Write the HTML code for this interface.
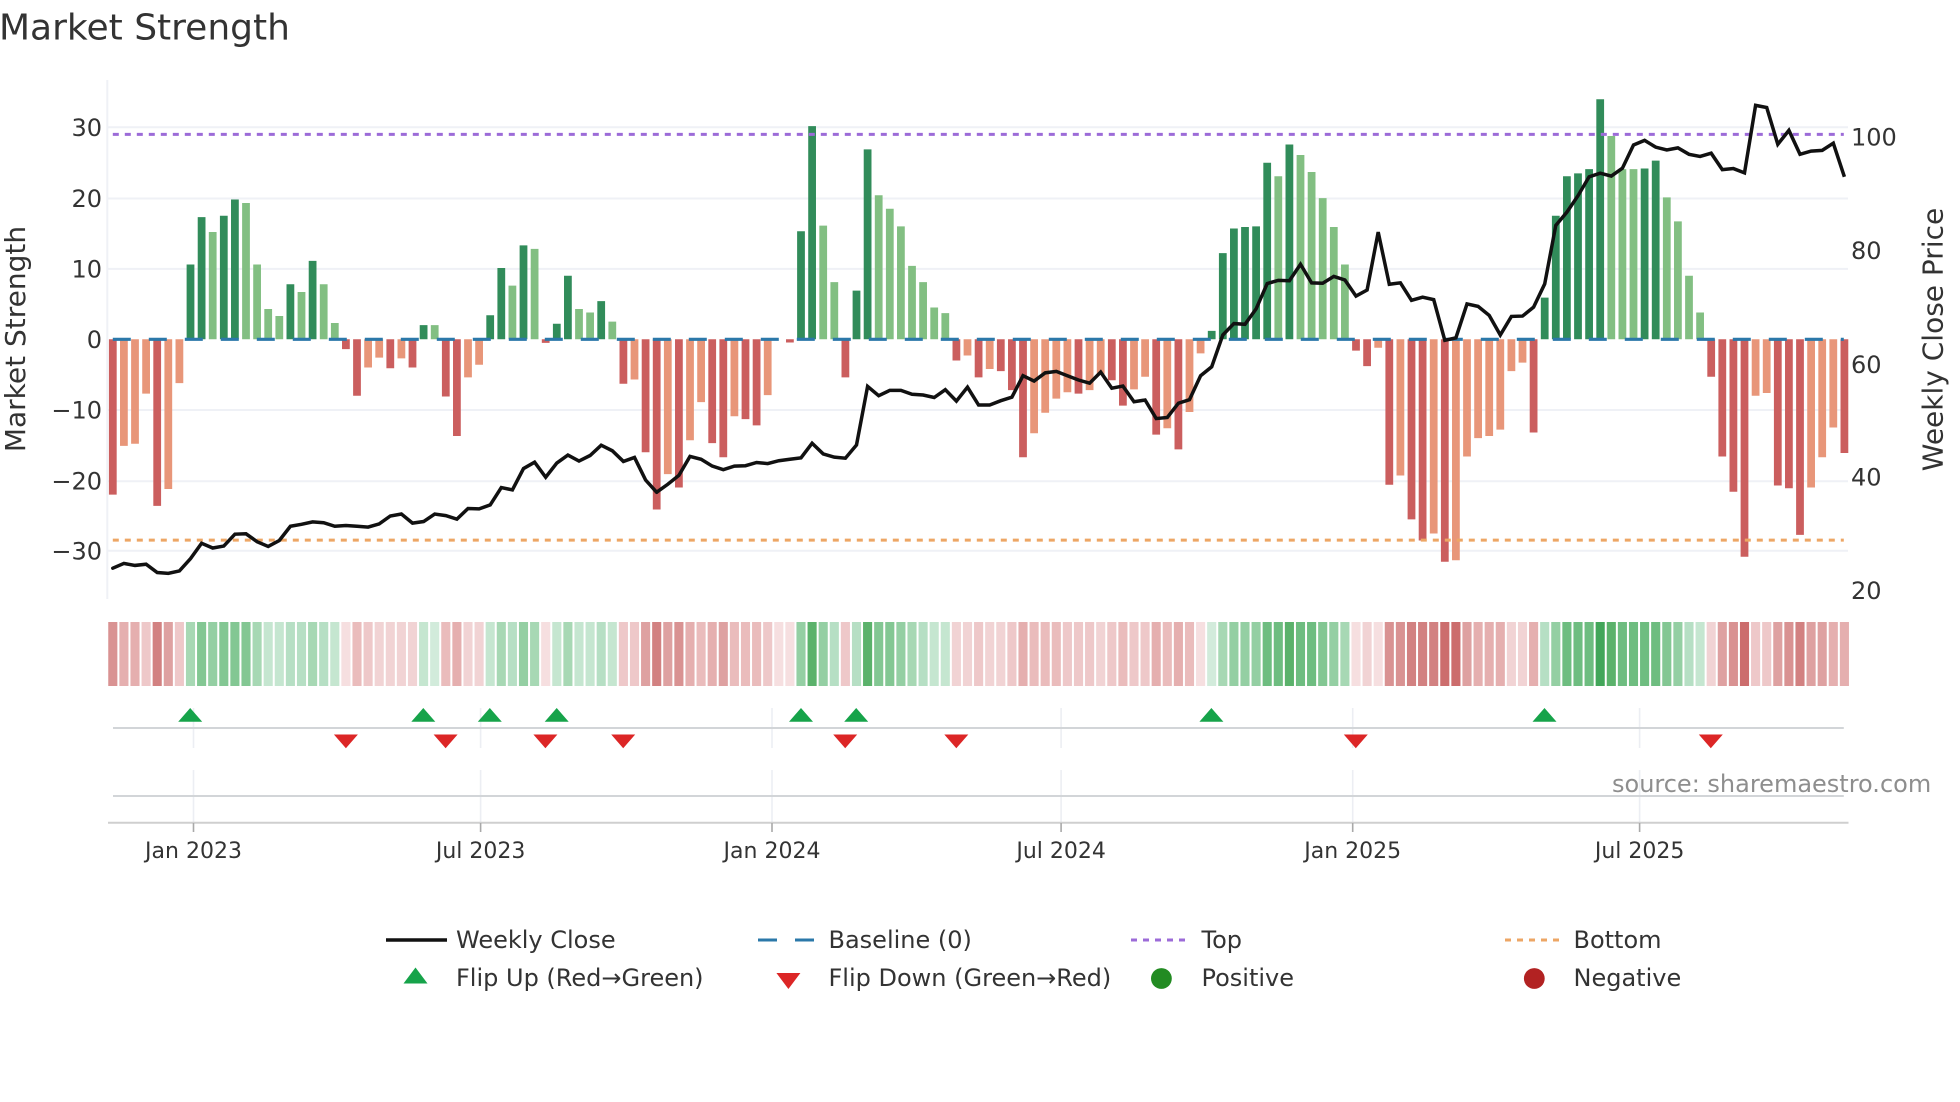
<!DOCTYPE html>
<html><head><meta charset="utf-8"><title>Market Strength</title>
<style>html,body{margin:0;padding:0;background:#fff}svg{display:block}text{font-family:"DejaVu Sans","Liberation Sans",sans-serif;fill:#333}</style>
</head><body>
<svg xmlns="http://www.w3.org/2000/svg" width="1960" height="1102" viewBox="0 0 1960 1102">
<rect width="1960" height="1102" fill="#fff"/>
<text x="-1" y="39.5" font-size="36">Market Strength</text>
<g stroke="#eff1f6" stroke-width="2" fill="none">
<path d="M107.3 80V599"/>
<path d="M108 127.3H1848M108 198.5H1848M108 268.9H1848M108 410H1848M108 481.2H1848M108 550.8H1848"/>
</g>
<g font-size="24" text-anchor="end">
<text x="102" y="136">30</text><text x="102" y="207">20</text><text x="102" y="277.5">10</text><text x="102" y="348">0</text><text x="102" y="418.5">−10</text><text x="102" y="489.5">−20</text><text x="102" y="559.5">−30</text>
</g>
<g font-size="24">
<text x="1851" y="145.6">100</text><text x="1851" y="259">80</text><text x="1851" y="373">60</text><text x="1851" y="485.6">40</text><text x="1851" y="599">20</text>
</g>
<text transform="translate(25,339) rotate(-90)" text-anchor="middle" font-size="28">Market Strength</text>
<text transform="translate(1942.5,339.5) rotate(-90)" text-anchor="middle" font-size="28">Weekly Close Price</text>
<g transform="translate(112.8,339.3) scale(11.1,7.06)" fill="none" stroke-width=".7">
<path stroke="#cb5e5e" d="M0 0V22M4 0V23.6M21 0V1.4M22 0V8M25 0V4.1M27 0V4M30 0V8.1M31 0V13.7M39 0V.5M46 0V6.3M48 0V16M49 0V24.1M51 0V21M54 0V14.7M55 0V16.7M57 0V11.3M58 0V12.2M61 0V.45M66 0V5.4M76 0V3M78 0V5.4M80 0V4.5M81 0V7.2M82 0V16.7M87 0V7.7M90 0V5.8M91 0V9.4M94 0V13.5M96 0V15.6M112 0V1.6M113 0V3.8M115 0V20.6M117 0V25.5M118 0V28.5M120 0V31.5M128 0V13.2M144 0V5.3M145 0V16.6M146 0V21.6M147 0V30.8M150 0V20.7M151 0V21.1M152 0V27.7M156 0V16.1"/>
<path stroke="#e89679" d="M1 0V15.1M2 0V14.8M3 0V7.7M5 0V21.2M6 0V6.2M23 0V4M24 0V2.6M26 0V2.7M32 0V5.4M33 0V3.6M47 0V5.7M50 0V19.1M52 0V14.3M53 0V8.9M56 0V10.9M59 0V7.9M77 0V2.3M79 0V4.2M83 0V13.3M84 0V10.4M85 0V8.4M86 0V7.5M88 0V7.2M89 0V5M92 0V7.1M93 0V5.3M95 0V12.6M97 0V10.3M98 0V2M114 0V1.2M116 0V19.3M119 0V27.5M121 0V31.3M122 0V16.6M123 0V14M124 0V13.7M125 0V12.8M126 0V4.5M127 0V3.3M148 0V8M149 0V7.6M153 0V21M154 0V16.7M155 0V12.5"/>
<path stroke="#318c5a" d="M7 0V-10.6M8 0V-17.3M10 0V-17.5M11 0V-19.8M16 0V-7.8M18 0V-11.1M28 0V-2M34 0V-3.4M35 0V-10.1M37 0V-13.3M40 0V-2.2M41 0V-9M44 0V-5.4M62 0V-15.3M63 0V-30.2M67 0V-6.9M68 0V-26.9M99 0V-1.2M100 0V-12.2M101 0V-15.7M102 0V-15.9M103 0V-16M104 0V-25M106 0V-27.6M129 0V-5.9M130 0V-17.5M131 0V-23.1M132 0V-23.5M133 0V-24.1M134 0V-34M138 0V-24.2M139 0V-25.3"/>
<path stroke="#82bf82" d="M9 0V-15.2M12 0V-19.3M13 0V-10.6M14 0V-4.3M15 0V-3.3M17 0V-6.7M19 0V-7.8M20 0V-2.3M29 0V-2M36 0V-7.6M38 0V-12.8M42 0V-4.3M43 0V-3.8M45 0V-2.5M64 0V-16.1M65 0V-8.1M69 0V-20.4M70 0V-18.5M71 0V-16M72 0V-10.4M73 0V-8.1M74 0V-4.5M75 0V-3.7M105 0V-23.1M107 0V-26.1M108 0V-23.7M109 0V-20M110 0V-15.9M111 0V-10.6M135 0V-28.8M136 0V-24.1M137 0V-24.1M140 0V-20.1M141 0V-16.7M142 0V-9M143 0V-3.8"/>
</g>
<path d="M112.8 339.3H1843.8" stroke="#2b78a9" stroke-width="3.2" stroke-dasharray="18 18" fill="none"/>
<path d="M112.8 134.4H1843.8" stroke="#9c6bd8" stroke-width="3" stroke-dasharray="6 6" fill="none"/>
<path d="M112.8 540.1H1843.8" stroke="#eda665" stroke-width="3" stroke-dasharray="6 6" fill="none"/>
<g fill="none" stroke="#111" stroke-width="3.5" stroke-linejoin="miter">
<path vector-effect="non-scaling-stroke" stroke-linecap="round" transform="translate(112.8,0) scale(11.1,.3954)" d="M0 1437L1 1425L2 1430L3 1427L4 1448L5 1450L6 1444L7 1413L8 1374L9 1386L10 1381L11 1351L12 1350L13 1370L14 1382L15 1367L16 1331L17 1326L18 1320L19 1322L20 1331L21 1329L22 1331L23 1333L24 1325L25 1305L26 1300L27 1323L28 1319L29 1300L30 1304L31 1313L32 1286L33 1287L34 1277L35 1233L36 1239L37 1185L38 1169L39 1207L40 1171L41 1151L42 1166L43 1152L44 1126L45 1140L46 1167L47 1157L48 1214L49 1245"/>
<path vector-effect="non-scaling-stroke" transform="translate(112.8,60) scale(11.1,.35714)" d="M49 1210L50 1188L51 1163L52 1110L53 1118L54 1137L55 1147L56 1137L57 1136L58 1127L59 1130L60 1122L61 1118L62 1114L63 1073L64 1103L65 1112L66 1115L67 1078L68 914L69 940L70 925L71 925L72 936L73 938L74 945L75 923L76 955L77 916L78 966L79 966L80 954L81 944L82 884L83 899L84 876L85 872L86 884L87 896L88 905L89 874L90 919L91 913L92 957L93 952L94 1004L95 1001L96 961L97 951L98 884L99 859L100 770L101 738L102 740L103 697L104 626L105 617L106 618L107 572L108 624L109 625L110 606L111 616L112 661L113 644L114 482L115 628L116 624L117 673L118 664L119 671L120 785L121 778L122 683L123 690L124 715L125 770L126 718L127 717L128 692L129 627L130 463L131 426L132 380L133 327L134 317L135 325L136 303L137 238L138 225L139 244L140 252L141 246L142 264L143 270L144 261L145 307L146 304L147 316L148 127L149 133L150 236L151 197L152 264L153 255L154 253L155 233L156 327"/>
</g>
<g transform="translate(112.8,622) scale(11.1,64)" fill="none" stroke-width=".82">
<path stroke="#f6dfe0" d="M21 0V1M39 0V1M60 0V1M61 0V1M98 0V1M112 0V1M114 0V1"/>
<path stroke="#f1d3d4" d="M24 0V1M25 0V1M26 0V1M27 0V1M32 0V1M33 0V1M76 0V1M77 0V1M79 0V1M80 0V1M89 0V1M113 0V1M126 0V1M127 0V1M144 0V1"/>
<path stroke="#eec8c9" d="M3 0V1M6 0V1M23 0V1M46 0V1M47 0V1M59 0V1M66 0V1M78 0V1M81 0V1M86 0V1M87 0V1M88 0V1M90 0V1M92 0V1M93 0V1M148 0V1M149 0V1"/>
<path stroke="#eabcbc" d="M22 0V1M30 0V1M53 0V1M56 0V1M57 0V1M58 0V1M83 0V1M84 0V1M85 0V1M91 0V1M95 0V1M97 0V1"/>
<path stroke="#e5afaf" d="M1 0V1M2 0V1M31 0V1M52 0V1M54 0V1M82 0V1M94 0V1M96 0V1M123 0V1M124 0V1M125 0V1M128 0V1M155 0V1M156 0V1"/>
<path stroke="#dea1a1" d="M5 0V1M48 0V1M50 0V1M55 0V1M122 0V1M145 0V1M150 0V1M153 0V1M154 0V1"/>
<path stroke="#d99292" d="M0 0V1M51 0V1M115 0V1M116 0V1M146 0V1M151 0V1"/>
<path stroke="#d28181" d="M4 0V1M49 0V1M117 0V1M118 0V1M119 0V1M152 0V1"/>
<path stroke="#cc6d6d" d="M120 0V1M121 0V1M147 0V1"/>
<path stroke="#d2ebdb" d="M29 0V1M99 0V1"/>
<path stroke="#c5e6d0" d="M14 0V1M15 0V1M20 0V1M28 0V1M34 0V1M40 0V1M42 0V1M43 0V1M45 0V1M74 0V1M75 0V1M143 0V1"/>
<path stroke="#b6dfc4" d="M16 0V1M17 0V1M19 0V1M36 0V1M44 0V1M65 0V1M67 0V1M73 0V1M129 0V1M142 0V1"/>
<path stroke="#a7d8b4" d="M7 0V1M13 0V1M18 0V1M35 0V1M38 0V1M41 0V1M72 0V1M100 0V1M111 0V1"/>
<path stroke="#94cfa3" d="M9 0V1M37 0V1M62 0V1M64 0V1M71 0V1M101 0V1M102 0V1M103 0V1M110 0V1M130 0V1M141 0V1"/>
<path stroke="#83c793" d="M8 0V1M10 0V1M11 0V1M12 0V1M69 0V1M70 0V1M109 0V1M140 0V1"/>
<path stroke="#6ebd80" d="M104 0V1M105 0V1M107 0V1M108 0V1M131 0V1M132 0V1M133 0V1M136 0V1M137 0V1M138 0V1M139 0V1"/>
<path stroke="#5bb26b" d="M63 0V1M68 0V1M106 0V1M135 0V1"/>
<path stroke="#42a659" d="M134 0V1"/>
</g>
<g stroke="#eceef3" stroke-width="1.6" fill="none">
<path d="M193.5 708V748M480.6 708V748M772 708V748M1061.1 708V748M1352.7 708V748M1639.6 708V748"/>
<path d="M193.5 770V823M480.6 770V823M772 770V823M1061.1 770V823M1352.7 770V823M1639.6 770V823"/>
</g>
<path d="M113 728H1843.8M113 796H1843.8" stroke="#d2d5d8" stroke-width="2" fill="none"/>
<path d="M108 822.7H1848.5" stroke="#cfcfcf" stroke-width="2" fill="none"/>
<path d="M193.5 823V832M480.6 823V832M772 823V832M1061.1 823V832M1352.7 823V832M1639.6 823V832" stroke="#a9a9a9" stroke-width="1.6" fill="none"/>
<g fill="#16a34a">
<path d="M190.2 708l12 13.7h-24zM423.3 708l12 13.7h-24zM489.8 708l12 13.7h-24zM556.7 708l12 13.7h-24zM801 708l12 13.7h-24zM856.2 708l12 13.7h-24zM1211.4 708l12 13.7h-24zM1544.5 708l12 13.7h-24z"/>
</g>
<g fill="#dc2626">
<path d="M345.9 748.2l-12-13.7h24zM445.6 748.2l-12-13.7h24zM545.4 748.2l-12-13.7h24zM623.2 748.2l-12-13.7h24zM845.2 748.2l-12-13.7h24zM956.3 748.2l-12-13.7h24zM1355.8 748.2l-12-13.7h24zM1710.8 748.2l-12-13.7h24z"/>
</g>
<g font-size="22" text-anchor="middle">
<text x="193.5" y="858">Jan 2023</text><text x="480.6" y="858">Jul 2023</text><text x="772" y="858">Jan 2024</text><text x="1061.1" y="858">Jul 2024</text><text x="1352.7" y="858">Jan 2025</text><text x="1639.6" y="858">Jul 2025</text>
</g>
<text x="1612" y="792" font-size="24" style="fill:#8e8e8e">source: sharemaestro.com</text>
<g font-size="24">
<text x="456" y="948">Weekly Close</text><text x="828.5" y="948">Baseline (0)</text><text x="1201.5" y="948">Top</text><text x="1573.5" y="948">Bottom</text>
<text x="456" y="986">Flip Up (Red→Green)</text><text x="828.5" y="986">Flip Down (Green→Red)</text><text x="1201.5" y="986">Positive</text><text x="1573.5" y="986">Negative</text>
</g>
<path d="M386 940H447" stroke="#111" stroke-width="3.4" fill="none"/>
<path d="M758 940h19M795 940h19" stroke="#2b78a9" stroke-width="3" fill="none"/>
<path d="M1131 940H1187" stroke="#9c6bd8" stroke-width="3" stroke-dasharray="6 6" fill="none"/>
<path d="M1505 940H1560" stroke="#eda665" stroke-width="3" stroke-dasharray="6 6" fill="none"/>
<path d="M415.5 967.5l12 16h-24z" fill="#16a34a"/>
<path d="M788.4 989l-12-16h24z" fill="#dc2626"/>
<circle cx="1161.4" cy="978.5" r="10.4" fill="#228b22"/>
<circle cx="1534.3" cy="978.5" r="10.4" fill="#b22222"/>
</svg>
</body></html>
